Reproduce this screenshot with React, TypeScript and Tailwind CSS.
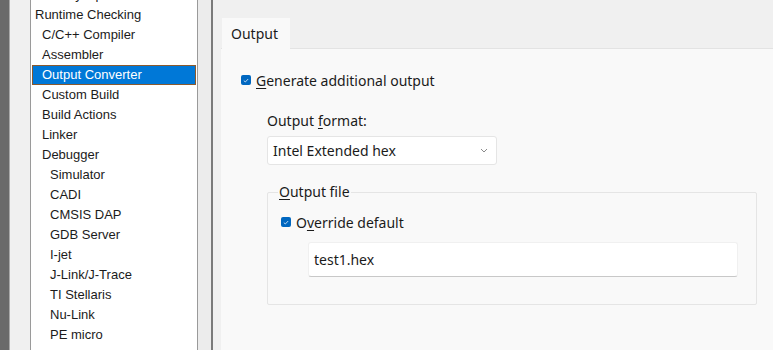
import React from "react";

const tree: { label: string; depth: number; selected?: boolean; dim?: boolean }[] = [
  { label: "Library Options", depth: 1 },
  { label: "Runtime Checking", depth: 0 },
  { label: "C/C++ Compiler", depth: 1 },
  { label: "Assembler", depth: 1 },
  { label: "Output Converter", depth: 1, selected: true },
  { label: "Custom Build", depth: 1 },
  { label: "Build Actions", depth: 1 },
  { label: "Linker", depth: 1 },
  { label: "Debugger", depth: 1 },
  { label: "Simulator", depth: 2 },
  { label: "CADI", depth: 2 },
  { label: "CMSIS DAP", depth: 2 },
  { label: "GDB Server", depth: 2 },
  { label: "I-jet", depth: 2 },
  { label: "J-Link/J-Trace", depth: 2 },
  { label: "TI Stellaris", depth: 2 },
  { label: "Nu-Link", depth: 2 },
  { label: "PE micro", depth: 2 },
  { label: "ST-LINK", depth: 2, dim: true },
];

function Check() {
  return (
    <span className="flex h-[10px] w-[10px] items-center justify-center rounded-[2px] bg-[#0067c0]">
      <svg width="6" height="5" viewBox="0 0 6 5" fill="none">
        <path d="M0.8 2.6 L2.3 4 L5.2 1" stroke="#cfe3f7" strokeWidth="0.9" />
      </svg>
    </span>
  );
}

export default function App() {
  return (
    <div className="flex h-[350px] w-[773px] overflow-hidden bg-[#f0f0f0] text-[#1b1b1b]">
      {/* outer frame strips */}
      <div className="w-[9px] bg-[#6a6a6a]" />
      <div className="w-px bg-[#a9a9a9]" />
      <div className="w-[20px] bg-[#f0f0f0]" />

      {/* category tree */}
      <div
        className="w-[168px] shrink-0 border-x border-[#9a9a9a] bg-white"
        style={{ fontFamily: '"Liberation Sans", Arial, sans-serif' }}
      >
        <div className="-mt-[15px] flex flex-col text-[13px]">
          {tree.map((t) => {
            const pad = t.depth === 0 ? "pl-[2px]" : t.depth === 1 ? "pl-[9px]" : "pl-[17px]";
            return (
              <div
                key={t.label}
                className={
                  "mx-px flex h-[20px] items-center " +
                  pad +
                  (t.selected
                    ? " border border-[#8a5a2e] bg-[#0078d7] text-white"
                    : " border border-transparent") +
                  (t.dim ? " text-[#b0b0b0]" : "")
                }
              >
                {t.label}
              </div>
            );
          })}
        </div>
      </div>

      {/* splitter */}
      <div className="w-[13px] bg-[#ececec]" />
      <div className="w-[2px] bg-[#7a7a7a]" />
      <div className="w-[8px] bg-[#f0f0f0]" />

      {/* settings pane */}
      <div
        className="flex flex-1 flex-col"
        style={{ fontFamily: '"Noto Sans", "Open Sans", sans-serif' }}
      >
        <div className="flex h-[49px] items-end border-b border-[#e3e3e3] pl-px">
          <div className="-mb-px flex h-[31px] w-[68px] items-center bg-[#f9f9f9] pl-[9px] text-[14px]">
            Output
          </div>
        </div>

        <div className="flex flex-1 flex-col bg-[#f9f9f9] pl-[20px] pr-[16px] text-[14px]">
          <div className="mt-[23px] flex h-[16px] items-center gap-[5px]">
            <Check />
            <span>
              <span className="underline underline-offset-2">G</span>enerate additional output
            </span>
          </div>

          <div className="ml-[26px] mt-[23px] flex flex-col">
            <div className="flex h-[18px] items-center">
              Output <span className="ml-[4px] underline underline-offset-2">f</span>ormat:
            </div>
            <div className="mt-[7px] flex h-[29px] w-[230px] items-center justify-between rounded-[3px] border border-[#e5e5e5] bg-white pl-[5px] pr-[8px]">
              <span>Intel Extended hex</span>
              <svg width="8" height="5" viewBox="0 0 8 5" fill="none">
                <path d="M1 1 L4 4 L7 1" stroke="#8a8a8a" strokeWidth="1" />
              </svg>
            </div>

            <div className="relative mt-[27px] h-[113px] w-[490px] rounded-[2px] border border-[#e5e5e5]">
              <span className="absolute -top-[11px] left-[10px] bg-[#f9f9f9] px-px leading-[20px]">
                <span className="underline underline-offset-2">O</span>utput file
              </span>
              <div className="ml-[13px] mt-[21px] flex h-[16px] items-center gap-[5px]">
                <Check />
                <span>
                  O<span className="underline underline-offset-2">v</span>erride default
                </span>
              </div>
              <div className="ml-[40px] mt-[12px] flex h-[35px] w-[430px] items-center rounded-[3px] border border-[#f0f0f0] border-b-[#c8c8c8] bg-white pl-[5px]">
                test1.hex
              </div>
            </div>
          </div>
        </div>
      </div>
    </div>
  );
}
